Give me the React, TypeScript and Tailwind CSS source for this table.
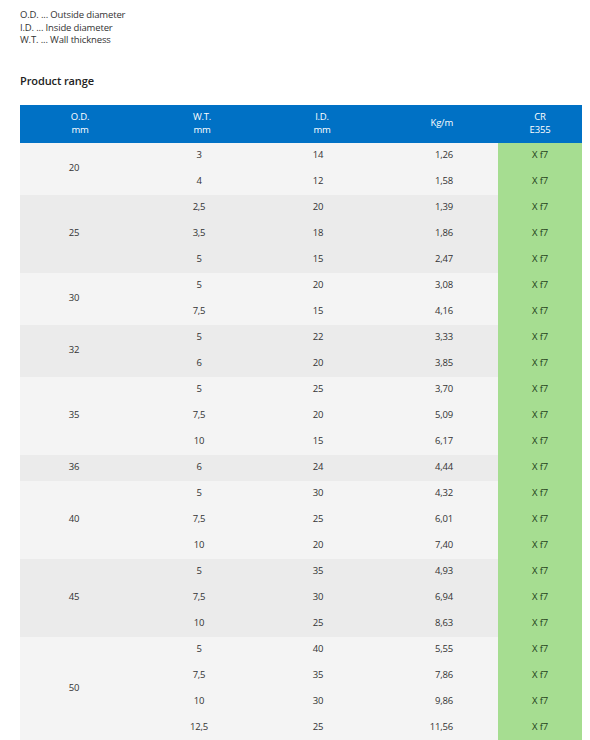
type Row = { wt: string; id: string; kg: string };
type Group = { od: string; rows: Row[] };

const groups: Group[] = [
  { od: '20', rows: [{ wt: '3', id: '14', kg: '1,26' }, { wt: '4', id: '12', kg: '1,58' }] },
  {
    od: '25',
    rows: [
      { wt: '2,5', id: '20', kg: '1,39' },
      { wt: '3,5', id: '18', kg: '1,86' },
      { wt: '5', id: '15', kg: '2,47' },
    ],
  },
  { od: '30', rows: [{ wt: '5', id: '20', kg: '3,08' }, { wt: '7,5', id: '15', kg: '4,16' }] },
  { od: '32', rows: [{ wt: '5', id: '22', kg: '3,33' }, { wt: '6', id: '20', kg: '3,85' }] },
  {
    od: '35',
    rows: [
      { wt: '5', id: '25', kg: '3,70' },
      { wt: '7,5', id: '20', kg: '5,09' },
      { wt: '10', id: '15', kg: '6,17' },
    ],
  },
  { od: '36', rows: [{ wt: '6', id: '24', kg: '4,44' }] },
  {
    od: '40',
    rows: [
      { wt: '5', id: '30', kg: '4,32' },
      { wt: '7,5', id: '25', kg: '6,01' },
      { wt: '10', id: '20', kg: '7,40' },
    ],
  },
  {
    od: '45',
    rows: [
      { wt: '5', id: '35', kg: '4,93' },
      { wt: '7,5', id: '30', kg: '6,94' },
      { wt: '10', id: '25', kg: '8,63' },
    ],
  },
  {
    od: '50',
    rows: [
      { wt: '5', id: '40', kg: '5,55' },
      { wt: '7,5', id: '35', kg: '7,86' },
      { wt: '10', id: '30', kg: '9,86' },
      { wt: '12,5', id: '25', kg: '11,56' },
    ],
  },
];

export default function App() {
  return (
    <div className="min-h-screen bg-white pl-[20px] pr-[8px] pt-[9px] font-['Open_Sans',sans-serif] text-[#333]">
      <div className="text-[9.5px] leading-[12.5px] tracking-[-0.15px]">
        <p>O.D. ... Outside diameter</p>
        <p>I.D. ... Inside diameter</p>
        <p>W.T. ... Wall thickness</p>
      </div>

      <h3 className="mt-[26px] text-[11px] font-semibold leading-[16px] tracking-[-0.1px] text-[#222]">
        Product range
      </h3>

      <table className="mt-[16px] w-[562px] table-fixed border-collapse text-[9.5px] tracking-[-0.2px]">
        <colgroup>
          <col className="w-[120px]" />
          <col className="w-[124px]" />
          <col className="w-[116px]" />
          <col className="w-[118px]" />
          <col className="w-[84px]" />
        </colgroup>
        <thead>
          <tr className="h-[38px] bg-[#0071c5] leading-[12.5px] text-white">
            <th className="font-normal">O.D.<br />mm</th>
            <th className="font-normal">W.T.<br />mm</th>
            <th className="font-normal">I.D.<br />mm</th>
            <th className="pr-[45px] text-right font-normal">Kg/m</th>
            <th className="font-normal">CR<br />E355</th>
          </tr>
        </thead>
        <tbody>
          {groups.map((g, gi) =>
            g.rows.map((r, ri) => (
              <tr
                key={`${g.od}-${r.wt}`}
                className={`h-[26px] ${gi % 2 === 0 ? 'bg-[#f4f4f4]' : 'bg-[#ebebeb]'}`}
              >
                {ri === 0 && (
                  <td rowSpan={g.rows.length} className="pr-[12px] text-center">
                    {g.od}
                  </td>
                )}
                <td className="pr-[6px] text-center">{r.wt}</td>
                <td className="pr-[8px] text-center">{r.id}</td>
                <td className="pr-[45px] text-right">{r.kg}</td>
                <td className="bg-[#a6dd91] text-center text-[#1f3d1a]">X f7</td>
              </tr>
            ))
          )}
        </tbody>
      </table>
    </div>
  );
}
